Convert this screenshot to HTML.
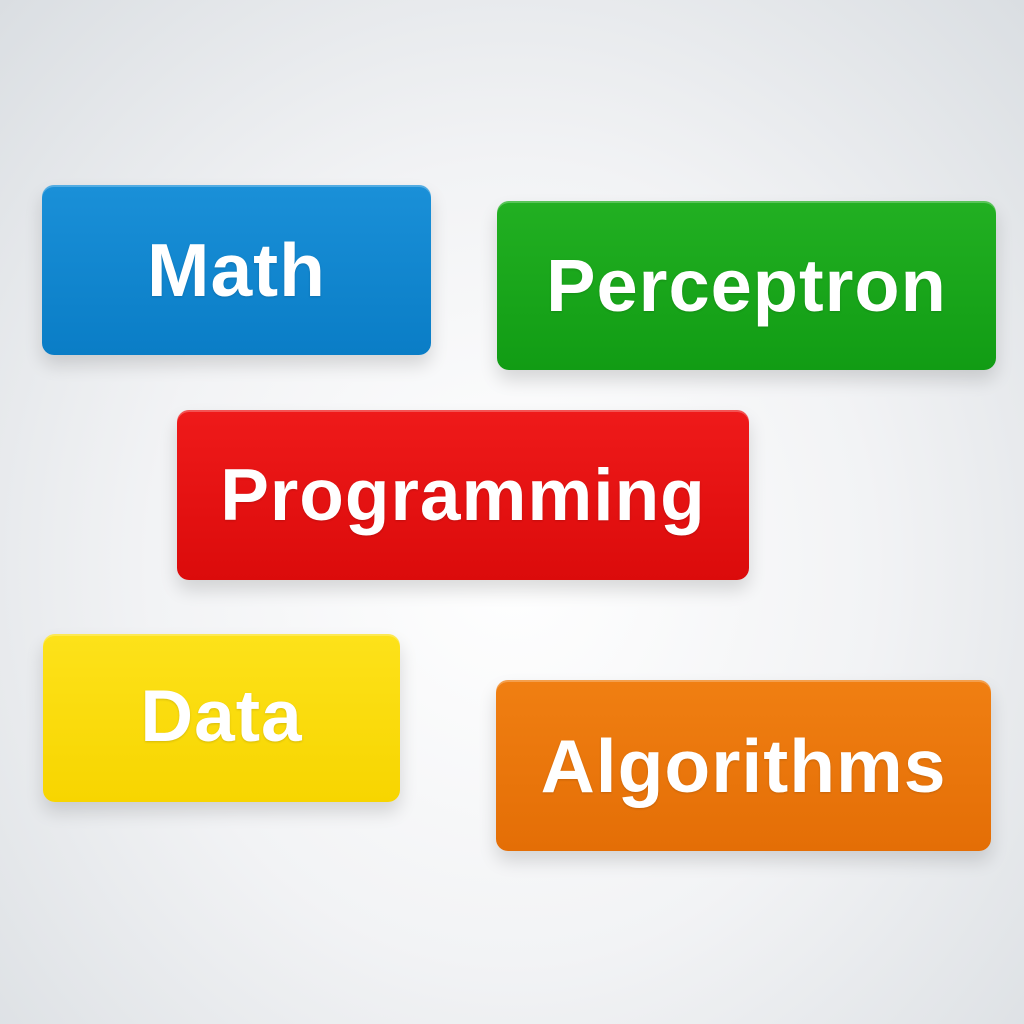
<!DOCTYPE html>
<html><head><meta charset="utf-8"><style>
html,body{margin:0;padding:0}
body{width:1024px;height:1024px;overflow:hidden;position:relative;
background:radial-gradient(ellipse at 50% 55%,#ffffff 0%,#f2f3f5 50%,#dadee2 100%);
font-family:"Liberation Sans",sans-serif}
.b{position:absolute;border-radius:12px;display:flex;align-items:center;justify-content:center;
color:#fff;font-weight:bold;letter-spacing:1px;box-shadow:0 10px 18px rgba(0,0,0,.14),inset 0 2px 0 rgba(255,255,255,.25);
text-shadow:0 1px 2px rgba(0,0,0,.15)}
</style></head><body>
<div class="b" style="left:42px;top:185px;width:389px;height:170px;background:linear-gradient(#1a90d8,#0a7dc6);font-size:75px">Math</div>
<div class="b" style="left:497px;top:201px;width:499px;height:169px;background:linear-gradient(#22b022,#119c14);font-size:74px">Perceptron</div>
<div class="b" style="left:177px;top:410px;width:572px;height:170px;background:linear-gradient(#ef1a1a,#db0b0b);font-size:73px">Programming</div>
<div class="b" style="left:43px;top:634px;width:357px;height:168px;background:linear-gradient(#fde21a,#f7d500);font-size:73px;padding-bottom:4px;box-sizing:border-box">Data</div>
<div class="b" style="left:496px;top:680px;width:495px;height:171px;background:linear-gradient(#f07f12,#e46e06);font-size:75px">Algorithms</div>
</body></html>
